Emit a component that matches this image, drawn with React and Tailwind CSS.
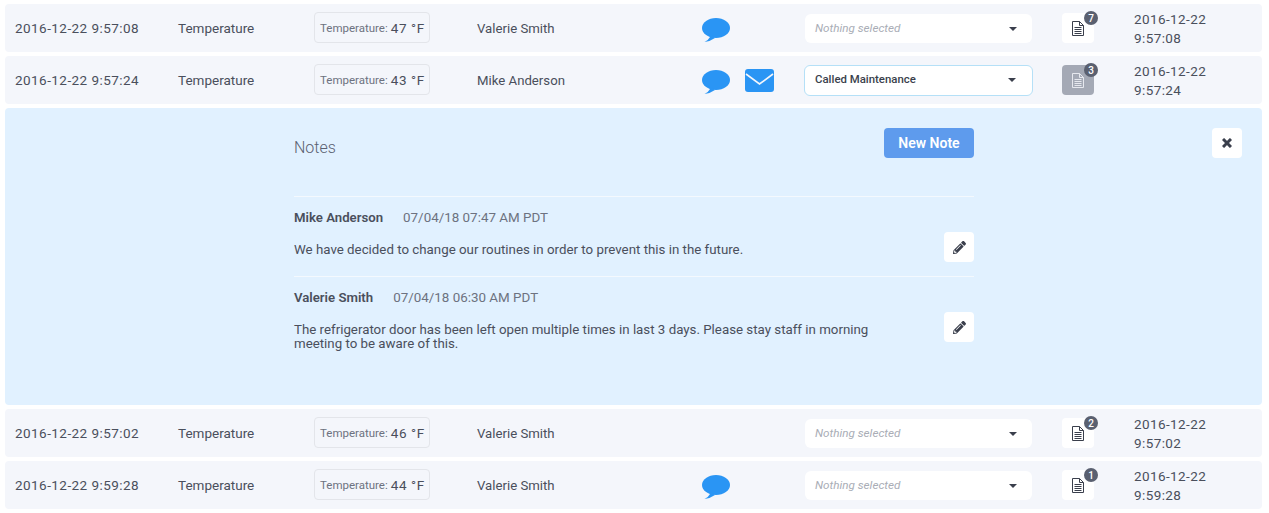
import { FaPencilAlt } from "react-icons/fa";

const rows = [
  { date: "2016-12-22 9:57:08", day: "2016-12-22", time: "9:57:08", temp: 47, name: "Valerie Smith", chat: true, count: 7 },
  { date: "2016-12-22 9:57:24", day: "2016-12-22", time: "9:57:24", temp: 43, name: "Mike Anderson", chat: true, mail: true, status: "Called Maintenance", count: 3, open: true },
  { date: "2016-12-22 9:57:02", day: "2016-12-22", time: "9:57:02", temp: 46, name: "Valerie Smith", count: 2 },
  { date: "2016-12-22 9:59:28", day: "2016-12-22", time: "9:59:28", temp: 44, name: "Valerie Smith", chat: true, count: 1 },
];

const notes = [
  {
    author: "Mike Anderson",
    stamp: "07/04/18 07:47 AM PDT",
    text: "We have decided to change our routines in order to prevent this in the future.",
  },
  {
    author: "Valerie Smith",
    stamp: "07/04/18 06:30 AM PDT",
    text: "The refrigerator door has been left open multiple times in last 3 days. Please stay staff in morning meeting to be aware of this.",
  },
];

function ChatIcon() {
  return (
    <svg width="28" height="24" viewBox="0 0 28 24" fill="#2a95f4" className="translate-y-[2px]">
      <ellipse cx="14" cy="10" rx="14" ry="10" />
      <path d="M6 15 L8 19 Q6.5 22 2.5 24 Q8 23.5 13 20 Z" />
    </svg>
  );
}

function MailIcon() {
  return (
    <svg width="29" height="23" viewBox="0 0 29 23">
      <rect width="29" height="23" rx="3" fill="#2a95f4" />
      <path d="M1 5 14.5 15 28 5" fill="none" stroke="#f4f6fb" strokeWidth="1.6" />
    </svg>
  );
}

function DocIcon({ color }) {
  return (
    <svg width="12" height="15" viewBox="0 0 12 15" fill="none" stroke={color} strokeWidth="1">
      <path d="M.5.5h7l4 4v10H.5z" />
      <path d="M7.5.5v4h4" />
      <path d="M2.5 6.5h7M2.5 8.5h7M2.5 10.5h7M2.5 12.5h7" />
    </svg>
  );
}

function Row({ row }) {
  return (
    <div className="grid h-12 grid-cols-[163px_136px_163px_225px_103px_257px_72px_1fr] items-center rounded bg-[#f4f6fb] pl-[10px] text-[13.5px]">
      <div className="tracking-[0.45px]">{row.date}</div>
      <div>Temperature</div>
      <div className="mb-px flex h-[31px] w-[116px] items-center rounded border border-[#e3e5ea] pt-[2px] pl-[5px] whitespace-nowrap">
        <span className="text-[11.5px] text-[#6d7280]">Temperature:</span>
        <span className="ml-[3px] text-[13.5px] tracking-[0.6px]">{row.temp} °F</span>
      </div>
      <div className="pt-px text-[13.2px]">{row.name}</div>
      <div className="flex items-center gap-[15px]">
        {row.chat && <ChatIcon />}
        {row.mail && <MailIcon />}
      </div>
      <div
        className={
          row.status
            ? "flex h-[31px] w-[229px] -translate-x-px items-center justify-between rounded-md border border-[#b5e0f7] bg-white pr-[16px] pl-[10px] text-[11.4px] font-medium text-[#3a3f4c]"
            : "flex h-[29px] w-[227px] items-center justify-between rounded-md bg-white pt-px pr-[15px] pl-[10px] text-[11.7px] text-[#a9adb6] italic"
        }
      >
        {row.status || "Nothing selected"}
        <span className="h-0 w-0 border-x-[4px] border-t-[4px] border-x-transparent border-t-[#3a3f4c]" />
      </div>
      <div className={`relative flex h-[30px] w-8 items-center justify-center rounded ${row.open ? "bg-[#a4a9b5]" : "bg-white"}`}>
        <DocIcon color={row.open ? "#e6e8ee" : "#3a3f4c"} />
        <span className="absolute -top-[2px] -right-[4px] flex h-[14px] w-[14px] items-center justify-center rounded-full bg-[#5a6070] text-[10px] font-medium text-white">
          {row.count}
        </span>
      </div>
      <div className="pt-[2px] leading-[19px] tracking-[0.4px]">
        {row.day}
        <br />
        {row.time}
      </div>
    </div>
  );
}

function Note({ note }) {
  return (
    <div className="flex h-20 border-t border-[#f4f9fe] pt-[11px]">
      <div className="w-[650px]">
        <div className="flex h-5 items-center">
          <span className="text-[13.2px] font-semibold">{note.author}</span>
          <span className="ml-5 text-[13.4px] text-[#6d7280]">{note.stamp}</span>
        </div>
        <p className="mt-[15px] w-[590px] text-[13.3px] leading-[14px]">{note.text}</p>
      </div>
      <button className="mt-6 flex h-[30px] w-[30px] items-center justify-center rounded bg-white">
        <FaPencilAlt className="h-[13px] w-[13px] text-[#3a3f4c]" />
      </button>
    </div>
  );
}

function NotesPanel() {
  return (
    <div className="flex h-[297px] justify-between rounded bg-[#e1f1ff] pt-5 pr-5 pl-[289px]">
      <div className="w-[680px]">
        <div className="flex h-[68px] items-start justify-between">
          <h2 className="mt-2 text-base font-light text-[#5a6070]">Notes</h2>
          <button className="h-[30px] w-[90px] rounded bg-[#5e9bed] text-sm font-semibold text-white">New Note</button>
        </div>
        {notes.map((note) => (
          <Note key={note.author} note={note} />
        ))}
      </div>
      <button className="flex h-[30px] w-[30px] items-center justify-center rounded bg-white">
        <svg width="10" height="10" viewBox="0 0 10 10" stroke="#3a3f4c" strokeWidth="3">
          <path d="M1 1l8 8M9 1l-8 8" />
        </svg>
      </button>
    </div>
  );
}

export default function App() {
  return (
    <div className="flex h-[513px] w-[1269px] flex-col gap-1 bg-white pt-1 pr-[7px] pl-[5px] font-['Roboto',sans-serif] text-[#4a4f5c]">
      <Row row={rows[0]} />
      <Row row={rows[1]} />
      <NotesPanel />
      <Row row={rows[2]} />
      <Row row={rows[3]} />
    </div>
  );
}
